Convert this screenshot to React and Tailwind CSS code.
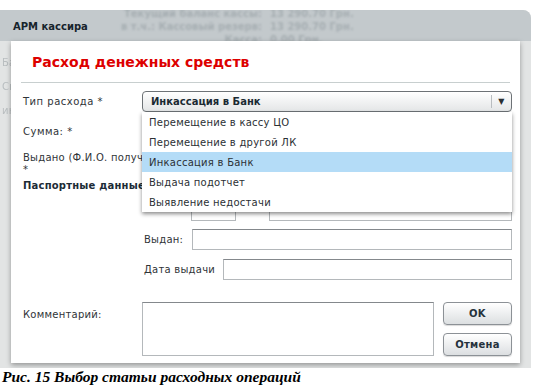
import React from "react";

const options = [
  "Перемещение в кассу ЦО",
  "Перемещение в другой ЛК",
  "Инкассация в Банк",
  "Выдача подотчет",
  "Выявление недостачи",
];

function Input({ className = "" }) {
  return (
    <div
      className={`h-[21px] border border-[#b4b8bb] border-t-[#84888c] bg-white ${className}`}
    />
  );
}

function Button({ children }) {
  return (
    <button className="w-[69px] h-[23px] rounded-[4px] border border-[#8c9196] bg-gradient-to-b from-white to-[#dcdfe1] text-[10px] font-bold tracking-[0.3px] text-[#25323c] shadow-[0_1px_1px_rgba(0,0,0,0.15)]">
      {children}
    </button>
  );
}

export default function App() {
  return (
    <div className="w-[535px] h-[390px] bg-white overflow-hidden font-['DejaVu_Sans',sans-serif] text-[10px] tracking-[0.25px] text-[#2f3437]">
      {/* App behind the dialog */}
      <div className="mt-[10px] w-[531px] h-[358px] relative rounded-tr-[8px] overflow-hidden bg-[#e2e4e4]">
        <div className="h-[31px] bg-[#c3c9cc] flex">
          <div className="w-[120px] pl-[13px] pt-[9px] font-bold text-[10px] tracking-normal text-[#17242c]">
            АРМ кассира
          </div>
          <div className="flex gap-[8px] text-[#a6aeb2] blur-[0.8px] font-bold text-[10px] tracking-normal leading-[13px] -mt-[3px]">
            <div className="w-[142px] text-right">
              <div>Текущий баланс кассы:</div>
              <div>в т.ч.: Кассовый резерв:</div>
              <div>Касса:</div>
            </div>
            <div>
              <div>13 290.70 Грн.</div>
              <div>13 290.70 Грн.</div>
              <div>0.00 Грн.</div>
            </div>
          </div>
        </div>
        <div className="flex flex-col gap-[9px] pt-[14px] pl-[2px] text-[#b9bec0] blur-[0.7px]">
          <div>Ба</div>
          <div>Сп</div>
          <div>ин</div>
        </div>

        {/* Dialog */}
        <div className="absolute left-[11px] top-[31px] w-[509px] h-[322px] bg-white shadow-[0_2px_5px_rgba(0,0,0,0.35)]">
          <div className="h-[41px] flex items-center pl-[21px] pt-[1px] text-[14px] tracking-normal font-bold text-[#dd0000]">
            Расход денежных средств
          </div>
          <div className="mx-[10px] border-t border-[#c8cfcf]" />

          <div className="pl-[12px] pr-[8px]">
            <div className="mt-[8px] flex items-center h-[21px]">
              <div className="w-[119px] tracking-[0.5px]">Тип расхода *</div>
              <div className="flex-1 h-[21px] rounded-[4px] border border-[#6d7276] bg-gradient-to-b from-white to-[#e4e6e7] flex items-center">
                <span className="flex-1 pl-[8px] font-bold text-[10px] tracking-normal text-[#1b2a33]">
                  Инкассация в Банк
                </span>
                <span className="w-px h-[13px] bg-[#b9bdc0]" />
                <span className="w-[19px] text-center text-[8px] text-[#2a2f33]">▼</span>
              </div>
            </div>

            <div className="mt-[9px] flex items-center h-[20px]">
              <div className="w-[119px] tracking-[0.5px]">Сумма: *</div>
              <Input className="flex-1" />
            </div>

            <div className="mt-[10px] flex">
              <div className="w-[119px] shrink-0 leading-[12px] pt-[1px] whitespace-nowrap">
                Выдано (Ф.И.О. получателя)
                <br />*
              </div>
              <Input className="flex-1" />
            </div>

            <div className="mt-[3px] h-[14px] leading-[14px] font-bold text-[10px] tracking-[0.2px] text-[#1c2b36] whitespace-nowrap">
              Паспортные данные
            </div>

            <div className="mt-[6px] flex items-center ml-[119px]">
              <div className="w-[49px] pl-[4px] pb-[8px]">Серия</div>
              <Input className="w-[45px] h-[20px]" />
              <div className="w-[33px] text-center pb-[8px]">№</div>
              <Input className="flex-1 h-[20px]" />
            </div>

            <div className="mt-[7px] flex items-center ml-[121px]">
              <div className="w-[48px]">Выдан:</div>
              <Input className="flex-1" />
            </div>

            <div className="mt-[9px] flex items-center ml-[121px]">
              <div className="w-[79px]">Дата выдачи</div>
              <Input className="flex-1" />
            </div>

            <div className="mt-[22px] flex">
              <div className="w-[119px] pt-[5px]">Комментарий:</div>
              <div className="w-[292px] h-[54px] border border-[#b4b8bb] border-t-[#84888c]" />
              <div className="ml-auto flex flex-col gap-[8px]">
                <Button>OK</Button>
                <Button>Отмена</Button>
              </div>
            </div>
          </div>

          {/* Open dropdown */}
          <div className="absolute left-[131px] top-[71px] w-[370px] bg-white shadow-[0_2px_4px_rgba(0,0,0,0.45)]">
            {options.map((o) => (
              <div
                key={o}
                className={`h-[20px] flex items-center pl-[7px] text-[#2b3034] ${
                  o === "Инкассация в Банк" ? "bg-[#b4dcf7]" : ""
                }`}
              >
                {o}
              </div>
            ))}
          </div>
        </div>
      </div>

      <div className="pl-[2px] pt-[1px] font-['Liberation_Serif',serif] font-bold italic text-[15.5px] leading-[16px] text-black tracking-normal">
        Рис. 15 Выбор статьи расходных операций
      </div>
    </div>
  );
}
